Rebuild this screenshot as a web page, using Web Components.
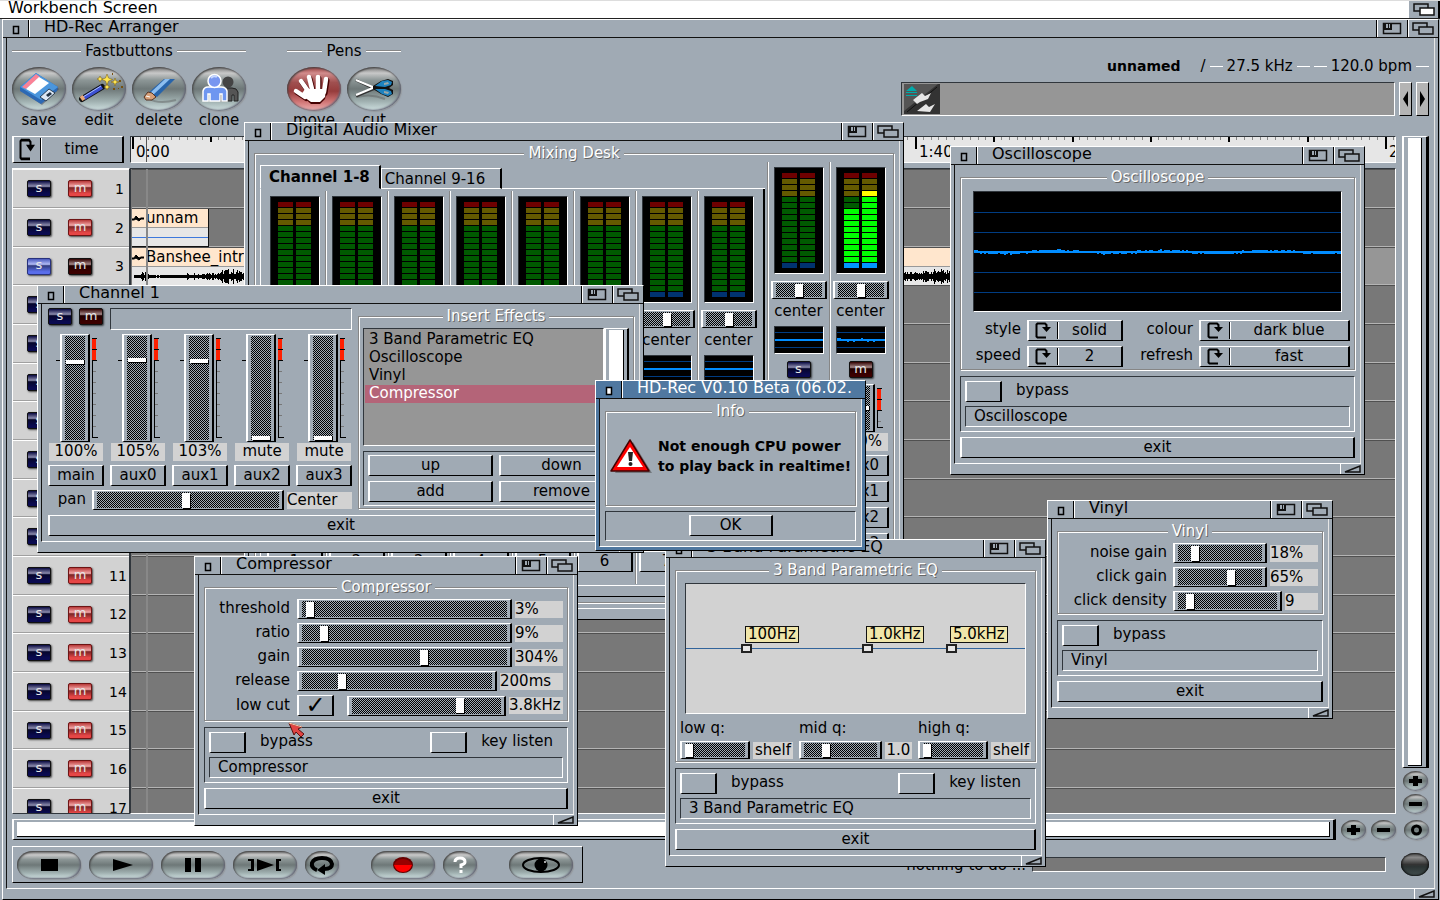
<!DOCTYPE html>
<html lang="en">
<head>
<meta charset="utf-8">
<title>HD-Rec Arranger</title>
<style>
html, body {height:100%; margin:0}
body {
    overflow:hidden;
    background:#a0aab4;
    color:#000;
    font:15px/20px "DejaVu Sans", "Liberation Sans", sans-serif;
    --face:#a0aab4;
    --light:#fff;
    --soft:#e6e6e6;
    --dark:#30363c;
    --well:#969696;
    --paper:#d2d2d2;
    --lane:#787878;
    --accent:#5078a0;
}
/* free floating windows, in stacking order */
.floating {position:absolute}
#mixer {left:244px; top:122px; width:660px}
#channel {left:37px; top:285px; width:607px}
#oscilloscope {left:950px; top:146px; width:415px}
#vinyl {left:1047px; top:500px; width:286px}
#compressor {left:194px; top:556px; width:384px}
#eq {left:665px; top:539px; width:381px}
#alert {left:595px; top:380px; width:271px}
#pointer {left:288px; top:722px}
.rows {display:grid; grid-template-columns:81px 1fr; gap:4px 7px; align-items:center; padding-bottom:2px}
.rows.wide {grid-template-columns:105px 1fr; gap:4px 6px; padding-bottom:0}
.cycles {display:grid; grid-template-columns:56px 96px 64px 1fr; gap:5px 6px; align-items:center}
.qs {display:grid; grid-template-columns:1fr 1fr 1fr; gap:6px}
.sunk {border:1px solid; border-color:var(--dark) var(--light) var(--light) var(--dark)}
.alert-body {display:flex; align-items:center; gap:6px; height:80px; padding-bottom:14px; box-sizing:border-box; font-size:14px; font-weight:bold; white-space:nowrap}
.alert-body svg {flex:none}
.alert-actions {display:flex; justify-content:center; margin-top:5px; padding:3px 0 4px}
.alert-actions wb-button {width:84px}
</style>
</head>
<body>

<wb-screen heading="Workbench Screen">
    <wb-window heading="HD-Rec Arranger" fill>
        <hd-arranger></hd-arranger>
    </wb-window>
</wb-screen>

<wb-window class="floating" id="mixer" heading="Digital Audio Mixer">
    <wb-group heading="Mixing Desk"><mix-desk></mix-desk></wb-group>
</wb-window>

<wb-window class="floating" id="oscilloscope" heading="Oscilloscope">
    <wb-group heading="Oscilloscope">
        <wave-scope large></wave-scope>
        <div class="cycles">
            <wb-cycle label="style" value="solid"></wb-cycle>
            <wb-cycle label="colour" value="dark blue"></wb-cycle>
            <wb-cycle label="speed" value="2"></wb-cycle>
            <wb-cycle label="refresh" value="fast"></wb-cycle>
        </div>
    </wb-group>
    <fx-footer name="Oscilloscope"></fx-footer>
</wb-window>

<wb-window class="floating" id="vinyl" heading="Vinyl">
    <wb-group heading="Vinyl">
        <div class="rows wide">
            <wb-slider label="noise gain" at="17" value="18%" room="48"></wb-slider>
            <wb-slider label="click gain" at="64" value="65%" room="48"></wb-slider>
            <wb-slider label="click density" at="9" value="9" room="33"></wb-slider>
        </div>
    </wb-group>
    <fx-footer name="Vinyl"></fx-footer>
</wb-window>

<wb-window class="floating" id="compressor" heading="Compressor">
    <wb-group heading="Compressor">
        <div class="rows">
            <wb-slider label="threshold" at="2" value="3%" room="48"></wb-slider>
            <wb-slider label="ratio" at="9" value="9%" room="48"></wb-slider>
            <wb-slider label="gain" at="60" value="304%" room="48"></wb-slider>
            <wb-slider label="release" at="20" value="200ms" room="63"></wb-slider>
            <wb-slider label="low cut" at="74" value="3.8kHz" room="54" switch></wb-slider>
        </div>
    </wb-group>
    <fx-footer name="Compressor" keys></fx-footer>
</wb-window>

<wb-window class="floating" id="eq" heading="3 Band Parametric EQ">
    <wb-group heading="3 Band Parametric EQ">
        <eq-plot></eq-plot>
        <div class="qs">
            <wb-slider label="low q:" at="0" value="shelf" room="40" stacked></wb-slider>
            <wb-slider label="mid q:" at="28" value="1.0" room="27" stacked></wb-slider>
            <wb-slider label="high q:" at="0" value="shelf" room="40" stacked></wb-slider>
        </div>
    </wb-group>
    <fx-footer name="3 Band Parametric EQ" keys></fx-footer>
</wb-window>

<wb-window class="floating" id="channel" heading="Channel 1">
    <channel-strip></channel-strip>
</wb-window>

<wb-window class="floating" id="alert" heading="HD-Rec V0.10 Beta (06.02." active>
    <wb-group heading="Info">
        <div class="alert-body">
            <svg width="42" height="36" viewBox="0 0 42 36" aria-hidden="true">
                <path d="M21 3 L40 34 H3Z" fill="#444" opacity=".5" transform="translate(2 1)"/>
                <path d="M20 2 L39 33 H1Z" fill="#f00" stroke="#400" stroke-width="1.5" stroke-linejoin="round"/>
                <path d="M20 9 L33 29 H7Z" fill="#fff"/>
                <path d="M18 14 h5 l-1 9 h-3Z" fill="#222"/><circle cx="20.500" cy="26" r="2" fill="#222"/>
            </svg>
            <div>Not enough CPU power<br>to play back in realtime!</div>
        </div>
    </wb-group>
    <div class="sunk alert-actions"><wb-button>OK</wb-button></div>
</wb-window>

<svg class="floating" id="pointer" width="17" height="16" viewBox="0 0 17 16" aria-hidden="true">
    <path d="M1 1 L14 5 L10 7 L16 12 L13 15 L8 10 L6 13Z" fill="#e04444" stroke="#5a1010"/>
    <path d="M1 1 L14 5" stroke="#ffd0b0"/>
</svg>

<script>
var base = `
    *, ::before, ::after {box-sizing:border-box}
    :host {display:block; box-sizing:border-box}
    :host([hidden]) {display:none}
    button, input, select {font:inherit; color:inherit; margin:0; padding:0; border:0; border-radius:0; background:none; appearance:none; outline-offset:-3px}
    svg {display:block}
    .raised {border:solid; border-width:1px 2px; border-color:var(--light) #000 #000 var(--light); background:var(--face)}
    .sunk {border:1px solid; border-color:var(--dark) var(--light) var(--light) var(--dark)}
`;

class WbElement extends HTMLElement {
    constructor() {
        super();
        this.sr = this.attachShadow({ mode: 'open' });
    }
    connectedCallback() {
        this.sr.innerHTML = '<style>' + base + this.css() + '</style>' + this.html();
    }
    get(name, fallback) {
        return this.getAttribute(name) || fallback || '';
    }
    css() { return ''; }
    html() { return ''; }
}

// repeatable noise, so that a wave looks the same on each load
function noise(i) {
    var n = Math.sin(i * 12.9898) * 43758.5453;
    return n - Math.floor(n);
}

var gadgets = {
    close: '<svg width="8" height="10" viewBox="0 0 8 10"><path class="fill" d="M1.500 1.500h5v7h-5z" stroke="#000" stroke-width="1.500"/></svg>',
    zoom: '<svg width="20" height="13" viewBox="0 0 20 13"><path d="M1.500 1.500h17v10h-17z" fill="none" stroke="#111" stroke-width="1.500"/><path d="M2 1h8v7H2z" fill="#111"/><path d="M4 2h2v4h-2zM7 2h1v4h-1z" fill="#a0aab4"/></svg>',
    depth: '<svg width="22" height="13" viewBox="0 0 22 13"><path d="M1 1h14v7h-14z" fill="none" stroke="#111" stroke-width="1.500"/><path class="fill" d="M7 5h14v7h-14z" stroke="#111" stroke-width="1.500"/></svg>',
    size: '<svg width="18" height="8" viewBox="0 0 18 8"><path d="M1 7 L16 1 V7Z" fill="none" stroke="#111" stroke-width="1.500"/></svg>',
    cycle: '<svg width="16" height="17" viewBox="0 0 16 17" preserveAspectRatio="none"><path d="M10 14.500 v1 H2.500 L1.500 14.500 V2.500 L2.500 1.500 H10 L11.500 3 V6" fill="none" stroke="#000" stroke-width="2"/><path d="M7 5h9l-4.500 5z"/></svg>'
};

class WbScreen extends WbElement {
    css() {
        return `
        :host {display:flex; flex-direction:column; height:100vh}
        header {display:flex; height:19px; background:#fff; border-top:1px solid #ddd; border-bottom:1px solid #222; padding-left:8px; font-size:16px; line-height:14px}
        span {flex:1}
        button {width:31px; background:var(--face); padding:1px 4px; border-right:2px solid #000; color:#fff}
        .fill {fill:#fff}
        main {flex:1; min-height:0}
        `;
    }
    html() {
        return `<header><span>${this.get('heading')}</span><button aria-label="Flip screen">${gadgets.depth}</button></header>
        <main><slot></slot></main>`;
    }
}
customElements.define('wb-screen', WbScreen);

class WbWindow extends WbElement {
    css() {
        return `
        :host {display:flex; flex-direction:column; background:var(--face); border:1px solid; border-color:var(--light) #000 #000 var(--light)}
        :host([fill]) {height:100%; margin:0 1px 0 2px}
        :host([active]) {background:var(--accent)}
        header {display:flex; height:17px; flex:none}
        header button {display:flex; align-items:center; justify-content:center}
        .close {width:26px; padding-top:3px; border-right:1px solid #000}
        .title {flex:1; min-width:0; white-space:nowrap; padding-left:14px; border-left:1px solid var(--light); font-size:16px; line-height:13px}
        .gadget {width:31px; border-left:1px solid #000; box-shadow:inset 1px 0 var(--light)}
        .fill {fill:var(--face)}
        .rule {height:1px; background:#111; flex:none}
        .pane {flex:1; min-height:0; margin:0 3px; padding:0 5px 5px; background:var(--face); border:1px solid; border-color:transparent var(--soft) var(--light) #111; border-top:0}
        footer {display:flex; justify-content:flex-end; height:10px; flex:none}
        footer button {width:24px; padding:1px 3px; border-left:1px solid var(--light)}
        :host([active]) .title {color:#fff}
        :host([active]) .fill {fill:#fff}
        :host([active]) footer {height:3px}
        `;
    }
    html() {
        var active = this.hasAttribute('active');
        return `<header>
            <button class="close" aria-label="Close">${gadgets.close}</button>
            <div class="title">${this.get('heading')}</div>
            ${active ? '' : `<button class="gadget" aria-label="Zoom">${gadgets.zoom}</button>
            <button class="gadget" aria-label="Depth">${gadgets.depth}</button>`}
        </header>
        <div class="rule"></div>
        <div class="pane"><slot></slot></div>
        <footer>${active ? '' : `<button aria-label="Size">${gadgets.size}</button>`}</footer>`;
    }
}
customElements.define('wb-window', WbWindow);

class WbGroup extends WbElement {
    css() {
        return `
        :host {padding-top:2px}
        fieldset {min-width:0; margin:0; padding:2px 4px; border:1px solid #868686; box-shadow:inset 1px 1px var(--light), 1px 1px var(--light)}
        legend {margin:0 auto; padding:0 4px; background:var(--face); color:#fff; text-shadow:1px 1px #666; line-height:20px}
        `;
    }
    html() {
        return `<fieldset><legend>${this.get('heading')}</legend><slot></slot></fieldset>`;
    }
}
customElements.define('wb-group', WbGroup);

class WbButton extends WbElement {
    css() {
        return `button {display:block; width:100%; height:21px; line-height:17px; padding-bottom:1px; text-align:center; white-space:nowrap}`;
    }
    html() {
        return '<button class="raised"><slot></slot></button>';
    }
}
customElements.define('wb-button', WbButton);

class WbCycle extends WbElement {
    css() {
        return `
        :host {display:contents}
        label {text-align:right; line-height:18px; padding-bottom:3px}
        .box {display:flex; align-items:center; height:21px}
        :host([tall]) .box {height:27px; width:112px}
        svg {margin:0 6px; flex:none}
        select {flex:1; min-width:0; align-self:stretch; margin:1px 0; border-left:1px solid #000; box-shadow:inset 1px 0 var(--light); text-align:center; text-align-last:center; line-height:17px}
        :host([tall]) svg {height:23px; margin:0 5px}
        `;
    }
    html() {
        var label = this.get('label');
        return `${label ? `<label for="pick">${label}</label>` : ''}
        <div class="box raised">${gadgets.cycle}<select id="pick" aria-label="${label || 'unit'}"><option>${this.get('value')}</option></select></div>`;
    }
}
customElements.define('wb-cycle', WbCycle);

var dither = 'repeating-conic-gradient(#000 0 25%, #a0aab4 0 50%) 0 0 / 2px 2px content-box, var(--face)';

// label, slider and read-out; the label and the rest are cells of the parent's grid
class WbSlider extends WbElement {
    css() {
        return `
        :host {display:contents}
        :host([stacked]), :host([bare]) {display:block}
        label {text-align:right; line-height:18px; padding-bottom:2px; white-space:nowrap}
        :host([stacked]) label {display:block; text-align:left; padding:5px 0 4px}
        .row {display:flex; align-items:center; gap:3px}
        input[type=range] {flex:1; min-width:0; width:100%; height:20px; padding:1px 3px; background:${dither}}
        :host([stacked]) input[type=range], :host([bare]) input[type=range] {height:18px}
        input::-webkit-slider-thumb {appearance:none; width:8px; height:15px; background:#fff; box-shadow:1px 1px #000}
        :host([stacked]) input::-webkit-slider-thumb, :host([bare]) input::-webkit-slider-thumb {height:13px}
        wb-check {margin-right:10px}
        output {flex:none; width:${this.get('room', '0')}px; height:17px; line-height:16px; background:var(--paper); white-space:nowrap}
        :host([stacked]) output {text-align:center}
        `;
    }
    html() {
        var label = this.get('label'), bare = this.hasAttribute('bare');
        return `${bare ? '' : `<label for="range">${label}</label>`}
        <div class="row">
            ${this.hasAttribute('switch') ? '<wb-check checked name="low cut on"></wb-check>' : ''}
            <input class="raised" id="range" type="range" value="${this.get('at', '50')}" aria-label="${label || 'balance'}">
            ${bare ? '' : `<output for="range">${this.get('value')}</output>`}
        </div>`;
    }
}
customElements.define('wb-slider', WbSlider);

class WbCheck extends WbElement {
    css() {
        return `
        :host {display:flex; align-items:center; gap:14px}
        input {display:block; width:37px; height:21px}
        input:checked::before {content:"\\2713"; display:block; text-align:center; font-size:24px; line-height:18px; color:#000}
        label {line-height:18px; padding-bottom:3px}
        `;
    }
    html() {
        var label = this.get('label');
        return `<input class="raised" id="box" type="checkbox" aria-label="${label || this.get('name')}" ${this.hasAttribute('checked') ? 'checked' : ''}>
        ${label ? `<label for="box">${label}</label>` : ''}`;
    }
}
customElements.define('wb-check', WbCheck);

class FxFooter extends WbElement {
    css() {
        return `
        .panel {margin-top:6px; padding:4px}
        .checks {display:flex; justify-content:space-between; padding-right:10px; margin-bottom:4px}
        input {display:block; width:100%; height:21px; padding:0 8px 1px}
        wb-button {margin-top:5px}
        `;
    }
    html() {
        return `<div class="panel sunk">
            <div class="checks"><wb-check label="bypass"></wb-check>${this.hasAttribute('keys') ? '<wb-check label="key listen"></wb-check>' : ''}</div>
            <input class="sunk" type="text" aria-label="Name" value="${this.get('name')}">
        </div>
        <wb-button>exit</wb-button>`;
    }
}
customElements.define('fx-footer', FxFooter);

// solo and mute lamps
class WbLamp extends WbElement {
    css() {
        var solo = this.get('kind') == 's', lit = this.hasAttribute('lit');
        var colour = solo ? (lit ? '#5a6eeb' : '#0a0a50') : (lit ? '#e64646' : '#3c0000');
        var rim = lit ? (solo ? '#28327d' : '#6e1414') : '#111';
        return `
        :host {width:24px; height:17px}
        button {display:block; width:24px; height:17px; border:1px solid ${rim}; border-radius:2px; background:linear-gradient(#0003, #fff8 35%, #0007 45%, transparent 85%), ${colour}; color:#e6e6e6; font-size:13px; line-height:11px; padding-bottom:3px; box-shadow:1px 1px 2px #000a}
        `;
    }
    html() {
        return `<button aria-pressed="${this.hasAttribute('lit')}">${this.get('kind')}</button>`;
    }
}
customElements.define('wb-lamp', WbLamp);

class LevelMeter extends WbElement {
    css() {
        return `
        :host {width:50px; height:107px}
        .meter {display:flex; gap:3px; justify-content:center; height:100%; padding-top:5px; background:#000}
        .column {width:15px}
        i {display:block; height:5px; margin-bottom:1px; background:#005a00}
        i.lit {background:#0f0}
        i:nth-child(-n+4) {background:#645a00}
        i.lit:nth-child(-n+4) {background:#ff0}
        i:first-child {background:#6e0000}
        i:last-child {background:#003270}
        i.lit:last-child {background:#0096ff}
        `;
    }
    html() {
        var levels = this.get('levels', '16,16').split(',');
        return '<div class="meter sunk">' + levels.map(function(from) {
            var cells = '';
            for (var i = 0; i < 16; i++) {
                cells += i >= from ? '<i class="lit"></i>' : '<i></i>';
            }
            return '<div class="column">' + cells + '</div>';
        }).join('') + '</div>';
    }
}
customElements.define('level-meter', LevelMeter);

class WaveScope extends WbElement {
    css() {
        return `
        :host {width:50px}
        :host([large]) {width:auto; margin:2px 8px 8px}
        svg {width:100%; height:28px; background:#000}
        :host([large]) svg {height:121px}
        `;
    }
    html() {
        var large = this.hasAttribute('large'), w = large ? 364 : 48, h = large ? 119 : 26;
        var mid = large ? 59 : 12, grid = '', wave = '';
        (large ? [20, 40, 80, 100] : [5, 20]).forEach(function(y) {
            grid += `<path d="M0 ${y}H${w}V${y + 1}H0z" fill="#003c82"/>`;
        });
        if (large || this.hasAttribute('live')) {
            for (var x = 0; x < w; x += 2) {
                var d = Math.round(Math.sin(x / 17) * (large ? 1 : 0) + (noise(x) - 0.5) * 1.4);
                wave += `M${x} ${mid + Math.min(d, 0)}h2v${2 + Math.abs(d)}h-2z`;
            }
        } else {
            wave = `M0 ${mid}H${w}V${mid + 2}H0z`;
        }
        return `<svg class="sunk" viewBox="0 0 ${w} ${h}" preserveAspectRatio="none" shape-rendering="crispEdges">${grid}<path d="${wave}" fill="#008cff"/></svg>`;
    }
}
customElements.define('wave-scope', WaveScope);

class WbFader extends WbElement {
    css() {
        return `
        .row {display:flex; padding-left:8px; height:${this.get('size', '108')}px}
        input[type=range] {writing-mode:vertical-lr; direction:rtl; width:30px; height:100%; padding:1px 3px; background:${dither}}
        input::-webkit-slider-thumb {appearance:none; width:18px; height:4px; background:#fff; box-shadow:1px 1px #000}
        output {display:block; height:18px; margin:1px 1px 4px; background:var(--paper); text-align:center; line-height:16px}
        `;
    }
    html() {
        var size = +this.get('size', '108'), ticks = '';
        for (var y = 37; y < size - 6; y += 11) {
            ticks += `<path d="M3 ${y}.500h3" stroke="#777"/>`;
        }
        return `<div class="row">
            <svg width="4" height="30"><path d="M0 26.500h4" stroke="#000"/></svg>
            <input class="raised" type="range" value="${this.get('at', '77')}" aria-label="level">
            <svg width="10" height="${size}" shape-rendering="crispEdges"><path d="M2 4h4v22h-4z" fill="#ff2000"/><path d="M2 4.500h5M2 15.500h5M2 26.500h5M2.500 26V${size - 5}h5" fill="none" stroke="#000"/>${ticks}</svg>
        </div>
        <output>${this.get('value')}</output>`;
    }
}
customElements.define('wb-fader', WbFader);

class ChannelStrip extends WbElement {
    css() {
        return `
        :host {padding:4px 0 0 1px}
        .top {display:flex; gap:6px}
        .left {width:304px; flex:none}
        .name {display:flex; gap:7px; align-items:start; margin-bottom:4px}
        .name input {flex:1; min-width:0; height:22px}
        .faders {display:grid; grid-template-columns:repeat(5, 1fr); gap:6px}
        .pan {display:grid; grid-template-columns:38px 1fr; gap:6px; align-items:center; margin-top:4px}
        wb-group {flex:1; min-width:0; margin-top:-4px}
        .list {display:flex}
        ul {flex:1; height:118px; margin:0; padding:2px 1px; list-style:none; background:var(--well)}
        li {height:18px; line-height:17px; padding-left:4px}
        li.on {background:#b46478; color:#fff}
        .bar {width:25px; padding:1px 3px}
        .bar i {display:block; height:100%; background:#fff; border-right:1px solid #000}
        .actions {display:grid; grid-template-columns:1fr 1fr; gap:5px 6px; margin-top:5px; padding:3px 4px}
        .exit {margin-top:5px}
        `;
    }
    html() {
        var faders = [['main', '100%', 76], ['aux0', '105%', 78], ['aux1', '103%', 77], ['aux2', 'mute', 0], ['aux3', 'mute', 0]];
        return `<div class="top">
            <div class="left">
                <div class="name"><wb-lamp kind="s"></wb-lamp><wb-lamp kind="m"></wb-lamp><input class="sunk" type="text" aria-label="Channel name"></div>
                <div class="faders">${faders.map(f => `<div><wb-fader value="${f[1]}" at="${f[2]}"></wb-fader><wb-button>${f[0]}</wb-button></div>`).join('')}</div>
                <div class="pan"><wb-slider label="pan" at="49" value="Center" room="65"></wb-slider></div>
            </div>
            <wb-group heading="Insert Effects">
                <div class="list">
                    <ul class="sunk"><li>3 Band Parametric EQ</li><li>Oscilloscope</li><li>Vinyl</li><li class="on">Compressor</li></ul>
                    <div class="bar raised"><i></i></div>
                </div>
                <div class="actions sunk"><wb-button>up</wb-button><wb-button>down</wb-button><wb-button>add</wb-button><wb-button>remove</wb-button></div>
            </wb-group>
        </div>
        <wb-button class="exit">exit</wb-button>`;
    }
}
customElements.define('channel-strip', ChannelStrip);

class MixDesk extends WbElement {
    css() {
        return `
        :host {display:flex; gap:2px; height:438px; margin:-3px -2px 0 1px}
        .tabs {display:flex; align-items:flex-end}
        .tabs button {height:21px; line-height:18px; padding:0 15px 0 3px; border:1px solid; border-color:var(--light) #000 var(--light) var(--light); border-right-width:2px; white-space:nowrap}
        .tabs .on {height:24px; line-height:22px; padding:0 9px 0 8px; font-weight:bold; border-bottom-color:transparent}
        .tabs::after {content:""; flex:1; height:1px; background:var(--light)}
        .bank {display:flex; flex-direction:column; width:505px; padding:3px 0}
        .strips {display:flex; flex:1; padding:2px 2px 0; border:1px solid; border-color:transparent #000 transparent var(--light); border-top:0; border-right-width:2px}
        .end {height:12px; border:1px solid; border-color:var(--light) #000 #000 var(--light)}
        .masters {display:flex}
        .strip {display:flex; flex-direction:column; align-items:center; width:62px; padding:5px 0 12px; border-left:1px solid #868686; box-shadow:inset 1px 0 var(--light)}
        .strips .strip:first-child {border-color:transparent; box-shadow:none}
        wb-slider {width:56px; margin-top:7px}
        .where {line-height:18px; margin:3px 0 6px}
        wb-lamp {margin:7px 0 6px}
        wb-button, wb-fader {width:56px}
        .masters wb-button {margin-bottom:5px}
        .strips wb-button {margin-top:auto}
        `;
    }
    html() {
        var strip = (levels, live, rest) => `<div class="strip"><level-meter levels="${levels}"></level-meter><wb-slider bare></wb-slider><div class="where">center</div><wave-scope ${live}></wave-scope>${rest}</div>`;
        var sends = '<wb-fader size="48" value="100%" at="50"></wb-fader><wb-button>aux0</wb-button><wb-button>aux1</wb-button><wb-button>aux2</wb-button><wb-button>aux3</wb-button>';
        return `<div class="bank">
            <div class="tabs" role="tablist"><button class="on" role="tab">Channel 1-8</button><button role="tab">Channel 9-16</button></div>
            <div class="strips">${[1, 2, 3, 4, 5, 6, 7, 8].map(n => strip('16,16', '', `<wb-button>${n}</wb-button>`)).join('')}</div>
            <div class="end"></div>
        </div>
        <div class="masters">
            ${strip('16,16', '', '<wb-lamp kind="s"></wb-lamp>' + sends)}
            ${strip('6,3', 'live', '<wb-lamp kind="m"></wb-lamp>' + sends)}
        </div>`;
    }
}
customElements.define('mix-desk', MixDesk);

class EqPlot extends WbElement {
    css() {
        return `
        :host {margin:1px 5px 0}
        .plot {position:relative; height:131px; background:linear-gradient(#32649b, #32649b) 0 64px / 100% 1px no-repeat var(--paper)}
        .node {position:absolute; top:60px; width:11px; height:9px; border:2px solid #222; background:#e6e6e6}
        .tag {position:absolute; top:42px; height:17px; line-height:14px; padding:0 2px; border:1px solid #111; background:#f0e6aa; white-space:nowrap}
        `;
    }
    html() {
        return '<div class="plot sunk">' + [[55, '100Hz'], [176, '1.0kHz'], [260, '5.0kHz']].map(n =>
            `<div class="node" style="left:${n[0]}px"></div><div class="tag" style="left:${n[0] + 4}px">${n[1]}</div>`).join('') + '</div>';
    }
}
customElements.define('eq-plot', EqPlot);

var icons = {
    save: `<path d="M8 23 24 9 47 22 30 38Z" fill="#224" opacity=".4"/><path d="M8 20 24 6 46 20 45 24 29 37 8 24Z" fill="#2d69b4"/><path d="M8 20 24 6 46 20 29 33Z" fill="#4b96dc"/><path d="M10 20 24 7 28 10 14 22Z" fill="#fa8296"/><path d="M14 22 27 10 37 16 23 27Z" fill="#fff"/><path d="M28 30 37 22 43 26 34 34Z" fill="#dde8f4" stroke="#123" stroke-width=".8"/><path d="M34 28 38 25 40 27 36 30Z" fill="#234"/>`,
    edit: `<path d="M10 32 30 20" stroke="#111" stroke-width="6" stroke-linecap="round"/><path d="M12 31 30 20" stroke="#3c50d2" stroke-width="4"/><path d="M11 30 29 19" stroke="#aac0ff"/><path d="M9 32 12 30" stroke="#e8a878" stroke-width="5"/><g fill="#ffe650" stroke="#7a5a10" stroke-width=".5"><path d="M35 7l1.500 4 4 1.500-4 1.500-1.500 4-1.500-4-4-1.500 4-1.500z"/><path d="M43 11l1 3 3 1-3 1-1 3-1-3-3-1 3-1z"/><path d="M35 17l1 2 2 1-2 1-1 2-1-2-2-1 2-1zM28 9l1 2 2 1-2 1-1 2-1-2-2-1 2-1z"/></g><path d="M47 13h2v2h-2zM49 19h2v2h-2zM41 21h2v2h-2zM46 21h1v1h-1zM40 6h1v2h-1z" fill="#765010"/>`,
    'delete': `<path d="M16 31 Q26 38 44 33" stroke="#555" stroke-width="2" fill="none" opacity=".4"/><path d="M16 26 32 12 43 12 25 30Z" fill="#2864aa"/><path d="M18 26 33 12 38 12 21 28Z" fill="#8cbef0"/><path d="M16 25 20 26 24 30 20 33 14 33 12 30Z" fill="#d7a078" stroke="#532"/><path d="M14 29l4 1" stroke="#fff"/>`,
    clone: `<circle cx="36" cy="15" r="5.500" fill="#444"/><path d="M28 34V24q1-3 5-3h7q5 0 6 4v9h-4v-6h-2v6z" fill="#555" stroke="#222"/><path d="M11 34V24q1-4 5-4h13q5 0 6 4v10h-5v-7h-2v7H18v-7h-2v7z" fill="#6e96f0" stroke="#fff" stroke-width="1.500"/><circle cx="22.500" cy="14" r="6.500" fill="#7896f0" stroke="#fff" stroke-width="1.500"/><path d="M19 11q3-3 6-1" stroke="#c8d8ff" stroke-width="2" fill="none"/>`,
    move: `<g stroke-linecap="round" fill="none"><g stroke="#400" stroke-width="5" transform="translate(1 1.500)"><path d="M9 24 18 30M14 14 21 24M22 10 25 22M31 10 31 22M39 12 37 25"/></g><path d="M17 23H39L37 31 32 36H23L15 29Z" fill="#400" transform="translate(1 1)"/><g stroke="#fff" stroke-width="4.500"><path d="M9 24 18 30M14 14 21 24M22 10 25 22M31 10 31 22M39 12 37 25"/></g><path d="M18 22 39 22 38 30 33 35 24 35 14 28Z" fill="#fff"/></g>`,
    cut: `<path d="M10 30 Q24 26 38 32" stroke="#555" fill="none" opacity=".4" stroke-width="2"/><path d="M9 13 28 22M9 29 28 21" stroke="#333" stroke-width="3"/><path d="M9 13 28 21M9 28 28 20" stroke="#fff" stroke-width="2"/><path d="M26 19 34 14 41 12 46 14 46 18 42 21 46 23 46 27 41 30 34 27 26 22Z" fill="#111"/><path d="M28 19 35 14 41 13 45 15 44 18 38 20ZM28 22 38 22 44 24 45 27 41 29 35 27Z" fill="#1e82be"/><path d="M37 16 41 15 42 17 37 18ZM37 24 42 25 41 27 37 26Z" fill="#9aa6a6"/>`,
    stop: '<path d="M24 8h17v12H24z"/>',
    play: '<path d="M24 8v12l20-6z"/>',
    pause: '<path d="M24 7h6v14h-6zM34 7h6v14h-6z"/>',
    jump: '<path d="M15 8h6v12h-6v-2h3v-8h-3zM48 8h-5v12h5v-2h-2v-8h2zM24 8v12l17-6z"/>',
    loop: '<path d="M12 19 Q6 17 7 12 Q9 7 17 7 Q26 7 27 13 Q27 18 19 18" fill="none" stroke="#000" stroke-width="4"/><path d="M20 13v11l-8-5z"/>',
    record: '<ellipse cx="32" cy="14" rx="10" ry="8" fill="#600"/><path d="M23 14h18q-2 7-9 7t-9-7z" fill="#f00"/><path d="M23 14q2-6 9-6t9 6z" fill="#900"/>',
    help: '<path d="M12 11 Q12 7 17 7 Q22 7 22 11 Q22 13 18 14 V17M18 19v3" fill="none" stroke="#fff" stroke-width="3"/>',
    eye: '<ellipse cx="32" cy="14" rx="18" ry="7" fill="none" stroke="#000" stroke-width="2"/><circle cx="32" cy="14" r="6.500"/><circle cx="36" cy="11" r="1" fill="#ddd"/>',
    plus: '<path d="M6 8h4V5h5v3h4v4h-4v3h-5v-3H6z"/>',
    minus: '<path d="M6 8h13v4H6z"/>',
    ring: '<circle cx="12.500" cy="10" r="4" fill="none" stroke="#000" stroke-width="3"/>',
    led: ''
};

// glossy oval push button in five sizes
class WbOrb extends WbElement {
    css() {
        var size = { tool: [54, 44], pill: [64, 28], round: [34, 28], mini: [25, 20], led: [28, 23] }[this.get('shape')];
        this.size = size;
        return `
        :host {width:${size[0]}px; text-align:center}
        button {display:block; width:${size[0]}px; height:${size[1]}px; border-radius:${this.get('shape') == 'pill' ? '16px / 14px' : '50%'}; overflow:hidden;
            background:linear-gradient(#787878, #c8c8c8 14%, #8c9696 30%, #6e7878 50%, #a0b0b0 78%, #d2e4e4);
            box-shadow:inset 1px 1px 2px #444, inset -1px -1px 2px #667, 1px 1px 1px #8888}
        :host([hot]) button {background:linear-gradient(#963c3c, #d28c8c 14%, #a05050 35%, #963c3c 55%, #d27878 80%, #f0b4b4)}
        :host([shape=led]) button {background:linear-gradient(#555, #888 20%, #333 50%, #2c3434 60%, #445050); box-shadow:inset 0 0 3px #000, inset 0 0 2px #000}
        span {display:block; line-height:18px; height:20px; white-space:nowrap}
        `;
    }
    html() {
        var label = this.get('label');
        return `<button aria-label="${this.get('icon')}"><svg width="${this.size[0]}" height="${this.size[1]}">${icons[this.get('icon')]}</svg></button>${label ? `<span>${label}</span>` : ''}`;
    }
}
customElements.define('wb-orb', WbOrb);

class TimeRuler extends WbElement {
    css() {
        return `
        :host {flex:1; min-width:0}
        svg {width:100%; height:27px; background:var(--soft)}
        text {font-size:15px}
        `;
    }
    html() {
        var marks = '', names = { 0: '0:00', 100: '1:40', 160: '2:40' };
        for (var s = 0; s < 400; s++) {
            var x = 1 + Math.round(s * 783 / 100);
            var tall = names[s] ? 12 : (s % 10 ? 3 : 5);
            marks += `<path d="M${x} 0h${s % 10 ? 1 : 2}v${tall}h-${s % 10 ? 1 : 2}z" fill="${s % 10 ? '#888' : '#000'}"/>`;
            if (names[s]) {
                marks += `<text x="${x + 4}" y="20">${names[s]}</text>`;
            }
        }
        return `<svg class="sunk" shape-rendering="crispEdges">${marks}<path d="M15 0h1v27h-1z" fill="#555"/></svg>`;
    }
}
customElements.define('time-ruler', TimeRuler);

class AudioClip extends WbElement {
    css() {
        return `
        :host {height:38px; width:${this.get('length')}px; border-right:1px solid #111; border-bottom:1px solid #111; background:var(--soft); overflow:hidden}
        .name {display:flex; align-items:center; gap:2px; height:19px; line-height:17px; background:#ffe6cd; border-bottom:1px solid #999; white-space:nowrap}
        `;
    }
    html() {
        var w = +this.get('length'), body = '';
        if (this.hasAttribute('wave')) {
            for (var x = 2; x < w; x += 1) {
                var part = x < 16 ? 2 : x < 55 ? 1 : x < 70 ? 2 : x < 90 ? 3 : 4;
                var h = Math.round(part * 0.4 + noise(x) * part * (0.5 + noise(Math.floor(x / 9))));
                body += `M${x} ${9 - h}h1v${2 * h + 1}h-1z`;
            }
            body = `<path d="${body}"/>`;
        } else {
            body = `<path d="M0 9h${w}v1H0z" fill="#3c78dc"/>`;
        }
        return `<div class="name"><svg width="12" height="8" viewBox="0 0 12 8"><path d="M0 5h2l2-3 3 3 2-1h3v1H9L7 7 4 5 2 6H0z" stroke="#000"/></svg>${this.get('name')}</div>
        <svg width="${w}" height="18" shape-rendering="crispEdges">${body}</svg>`;
    }
}
customElements.define('audio-clip', AudioClip);

class HdArranger extends WbElement {
    css() {
        return `
        :host {display:flex; flex-direction:column; height:100%}
        .tools {display:flex; align-items:flex-start; height:98px; padding-top:3px; flex:none}
        .set {margin-right:41px}
        .rule {display:flex; align-items:center; gap:4px; margin-bottom:6px; line-height:20px}
        .rule::before, .rule::after {content:""; flex:1; height:2px; min-width:9px; border-bottom:1px solid #fff; border-top:1px solid #868686}
        .orbs {display:flex; gap:6px}
        .info {margin-left:auto; padding-top:15px; width:528px}
        .status {display:flex; align-items:center; justify-content:flex-end; line-height:20px; margin-bottom:6px; gap:4px}
        .status b {margin-right:16px; font-size:14px}
        .status i {width:13px; height:1px; background:#fff}
        .tray {display:flex; gap:4px}
        .tray div {flex:1; height:34px; padding:1px 2px; background:var(--well)}
        .tray button {width:13px; border-width:1px; background:#b4b4b4}
        .work {display:flex; gap:6px; flex:1; min-height:0}
        .left {flex:1; min-width:0; display:flex; flex-direction:column; gap:5px}
        .head {display:flex; gap:6px}
        .body {flex:1; min-height:0; display:flex}
        .names {width:118px; overflow:hidden; border:1px solid; border-color:var(--light) var(--dark) var(--dark) var(--light); background:var(--paper)}
        .names div {display:flex; align-items:center; height:39px; padding:0 5px 0 14px; border-top:1px solid #fff; border-bottom:1px solid #a0a0a0; font-size:14px}
        .names wb-lamp {margin-right:17px}
        .names span {margin-left:auto}
        .lanes {position:relative; flex:1; min-width:0; overflow:hidden; padding-left:1px; background:var(--lane)}
        /* play position, drawn over the clips */
        .lanes::after {content:""; position:absolute; top:0; bottom:0; left:15px; width:2px; background:#888}
        .lanes div {height:39px; border-top:1px solid #505050; border-bottom:1px solid #b4b4b4}
        .lanes .on {background:var(--well)}
        .names div:nth-child(3n), .lanes div:nth-child(3n) {height:38px}
        .side {display:flex; flex-direction:column; align-items:center; width:27px; gap:3px}
        .bar {width:27px; flex:1; padding:1px 4px; border-right-width:3px}
        .bar i {display:block; height:100%; background:#fff; border-right:1px solid #000; border-bottom:1px solid #000}
        .under {display:flex; align-items:center; gap:5px; margin:5px 0 6px}
        .under .bar {height:21px; padding:2px 3px}
        .under wb-orb:last-child {margin-left:3px}
        .foot {display:flex; align-items:center; flex:none}
        .deck {display:flex; align-items:center; gap:8px; width:571px; height:37px; padding:0 4px; border-width:1px}
        .gap {width:16px}
        .todo {margin-left:auto; line-height:16px; white-space:nowrap}
        .progress {width:354px; height:15px; margin:0 15px 0 6px; background:var(--lane)}
        `;
    }
    html() {
        var names = '', lanes = '';
        for (var i = 1; i < 18; i++) {
            names += `<div><wb-lamp kind="s" ${i == 3 ? 'lit' : ''}></wb-lamp><wb-lamp kind="m" ${i == 3 ? '' : 'lit'}></wb-lamp><span>${i}</span></div>`;
            lanes += `<div ${i == 3 ? 'class="on"' : ''}>${i == 2 ? '<audio-clip name="unnam" length="77"></audio-clip>' : i == 3 ? '<audio-clip name="Banshee_intro" length="1020" wave></audio-clip>' : ''}</div>`;
        }
        var tool = (name, extra) => `<wb-orb shape="tool" icon="${name}" label="${name}" ${extra || ''}></wb-orb>`;
        var deck = (shape, name) => `<wb-orb shape="${shape}" icon="${name}"></wb-orb>`;
        return `<div class="tools">
            <div class="set"><div class="rule">Fastbuttons</div><div class="orbs">${tool('save')}${tool('edit')}${tool('delete')}${tool('clone')}</div></div>
            <div class="set"><div class="rule">Pens</div><div class="orbs">${tool('move', 'hot')}${tool('cut')}</div></div>
            <div class="info">
                <div class="status"><b>unnamed</b><span>/</span><i></i><span>27.5 kHz</span><i></i><i></i><span>120.0 bpm</span><i></i></div>
                <div class="tray">
                    <div class="sunk"><svg width="36" height="30" viewBox="0 0 36 30"><path d="M0 0h36v30H0z" fill="#333"/><path d="M0 0h34L0 27z" fill="#555"/><path d="M3 28 33 3" stroke="#111"/><path d="M9 16 18 9 21 12 27 9 24 15 16 18 13 20zM13 27 22 20 25 23 31 20 26 28z" fill="#e6e6e6"/><path d="M2 7 8 2 13 7zM2 8h11v1H2zM2 11h11v1H2z" fill="#0aa"/></svg></div>
                    <button class="raised" aria-label="Back"><svg width="11" height="16" viewBox="0 0 11 16"><path d="M8 0v16L3 8z"/></svg></button>
                    <button class="raised" aria-label="Forward"><svg width="11" height="16" viewBox="0 0 11 16"><path d="M3 0v16l5-8z"/></svg></button>
                </div>
            </div>
        </div>
        <div class="work">
            <div class="left">
                <div class="head"><wb-cycle tall value="time"></wb-cycle><time-ruler></time-ruler></div>
                <div class="body"><div class="names">${names}</div><div class="lanes sunk">${lanes}</div></div>
            </div>
            <div class="side"><div class="bar raised"><i></i></div>${deck('mini', 'plus')}${deck('mini', 'minus')}</div>
        </div>
        <div class="under"><div class="bar raised"><i></i></div>${deck('mini', 'plus')}${deck('mini', 'minus')}${deck('mini', 'ring')}</div>
        <div class="foot">
            <div class="deck raised">${deck('pill', 'stop')}${deck('pill', 'play')}${deck('pill', 'pause')}${deck('pill', 'jump')}${deck('round', 'loop')}<div class="gap"></div>${deck('pill', 'record')}${deck('round', 'help')}<div class="gap"></div>${deck('pill', 'eye')}</div>
            <span class="todo">nothing to do ...</span>
            <div class="progress sunk"></div>${deck('led', 'led')}
        </div>`;
    }
}
customElements.define('hd-arranger', HdArranger);
</script>
</body>
</html>
